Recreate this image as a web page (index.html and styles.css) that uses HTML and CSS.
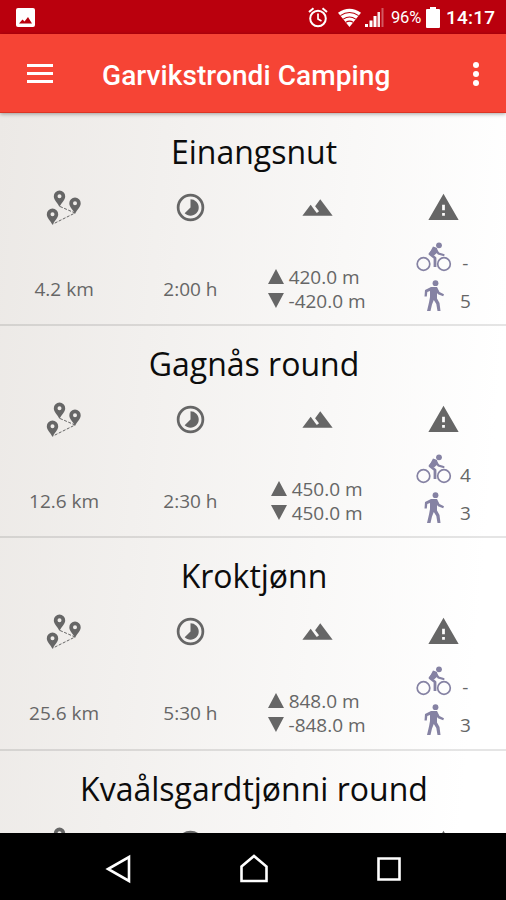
FILE: index.html
```html
<!DOCTYPE html>
<html lang="en">
<head>
<meta charset="utf-8">
<title>Garvikstrondi Camping</title>
<link rel="stylesheet" href="styles.css">
</head>
<body>
<svg class="defs" aria-hidden="true">
  <symbol id="route" viewBox="0 0 36 36">
    <path d="M14 17.500 29 24 7 35" fill="none" stroke="#666" stroke-width="1" stroke-dasharray="3 1.500"/>
    <path id="pin" fill-rule="evenodd" d="M13.500 1.500a5.700 5.700 0 0 0-5.700 5.700c0 4 3.800 6.200 5.700 10.800 1.900-4.600 5.700-6.800 5.700-10.800a5.700 5.700 0 0 0-5.700-5.700zm0 3.700a2 2 0 1 1 0 4 2 2 0 0 1 0-4z"/>
    <use href="#pin" x="15.500" y="7"/>
    <use href="#pin" x="-7" y="18"/>
  </symbol>
  <symbol id="time" viewBox="0 0 24 24"><path d="M16.240 7.760A5.970 5.970 0 0 0 12 6v6l-4.240 4.240c2.340 2.340 6.140 2.340 8.490 0 2.340-2.340 2.340-6.140-.010-8.480zM12 2a10 10 0 1 0 0 20 10 10 0 0 0 0-20zm0 18a8 8 0 1 1 0-16 8 8 0 0 1 0 16z"/></symbol>
  <symbol id="hills" viewBox="0 0 24 24"><path d="M14 6l-3.750 5 2.850 3.800-1.600 1.200C9.810 13.750 7 10 7 10l-6 8h22L14 6z"/></symbol>
  <symbol id="warn" viewBox="0 0 24 24"><path d="M1 21h22L12 2 1 21zm12-3h-2v-2h2v2zm0-4h-2v-4h2v4z"/></symbol>
  <symbol id="up" viewBox="0 0 16 15"><path d="M8 0l8 15H0z"/></symbol>
  <symbol id="down" viewBox="0 0 16 15"><path d="M0 0h16L8 15z"/></symbol>
  <symbol id="bike" viewBox="0 0 36 30">
    <g fill="none" stroke="#8582a3"><circle cx="7.500" cy="22" r="6.300" stroke-width="1.700"/><circle cx="28" cy="22" r="6.300" stroke-width="1.700"/><path d="M19.500 6 14 12l5 4v9" stroke-width="2.800" stroke-linejoin="round"/><path d="M19 7l3.500 4.500 5 1.500" stroke-width="2.200" stroke-linecap="round"/></g>
    <path d="M17 4.500l4 1.500 1 4-4 3.500-5-1.500z"/><circle cx="23" cy="3.300" r="2.900"/>
  </symbol>
  <symbol id="walk" viewBox="0 0 20 32">
    <circle cx="11.500" cy="3.200" r="2.900"/>
    <path d="M7 7h6l2.500 5 4.500 2.200-.8 2-5.200-2-1-1.200v5.500l2.500 4.500 1 8h-3l-1.200-7-2.500-4-1.800 4.500L6.500 31H3l2-8.500L6 17v-6l-2.700 1-.500 4.500H.5L1 10z"/>
  </symbol>
</svg>
<div class="phone">
  <div class="status">
    <svg class="photo" viewBox="0 0 19 19"><rect width="19" height="19" rx="2" fill="#fff"/><path d="M3 15.500l3.500-4 2 2 3.500-4.500 4 6.500z" fill="#ba000d"/></svg>
    <svg class="alarm" viewBox="0 0 20 21" fill="none" stroke="#fff"><circle cx="10" cy="11.500" r="7.800" stroke-width="2"/><path d="M10 6.500V12l3.500 2" stroke-width="1.700"/><path d="M1 5l4.500-3.800M19 5l-4.500-3.800" stroke-width="2"/></svg>
    <svg class="wifi" viewBox="0 0 24 20"><path d="M0 4.500Q12-4 24 4.500L12 19.500z" fill="#fff"/><path d="M2.500 7.500q9.500-6.500 19 0M5.500 11.200q6.500-4.500 13 0M8.200 14.500q3.800-2.500 7.600 0" fill="none" stroke="#ba000d" stroke-width="1.100"/></svg>
    <svg class="signal" viewBox="0 0 19 19" fill="#fff"><path d="M0 16h3v3H0zM4.500 12.500h3V19h-3zM8.500 8h3v11h-3z"/><path d="M12.500 4H15v15h-2.500z" opacity=".9"/><path d="M16.500 0h2v19h-2z" opacity=".35"/></svg>
    <span class="percent">96%</span>
    <svg class="battery" viewBox="0 0 14 21"><path d="M4 0h6v2h3q1 0 1 1v17q0 1-1 1H1q-1 0-1-1V3q0-1 1-1h3z" fill="#fff"/></svg>
    <span class="clock">14:17</span>
  </div>
  <header class="bar">
    <div class="menu"><i></i><i></i><i></i></div>
    <h1>Garvikstrondi Camping</h1>
    <div class="more"><i></i><i></i><i></i></div>
  </header>
  <main class="list">
    <section class="tour">
      <h2>Einangsnut</h2>
      <div class="icons"><svg class="route"><use href="#route"/></svg><svg><use href="#time"/></svg><svg><use href="#hills"/></svg><svg><use href="#warn"/></svg></div>
      <div class="values">
        <span>4.2 km</span><span>2:00 h</span>
        <div class="climb"><div><svg><use href="#up"/></svg>420.0 m</div><div><svg><use href="#down"/></svg>-420.0 m</div></div>
        <div class="grade"><svg class="bike"><use href="#bike"/></svg><b>-</b><svg class="walk"><use href="#walk"/></svg><b>5</b></div>
      </div>
    </section>
    <section class="tour">
      <h2>Gagnås round</h2>
      <div class="icons"><svg class="route"><use href="#route"/></svg><svg><use href="#time"/></svg><svg><use href="#hills"/></svg><svg><use href="#warn"/></svg></div>
      <div class="values">
        <span>12.6 km</span><span>2:30 h</span>
        <div class="climb short"><div><svg><use href="#up"/></svg>450.0 m</div><div><svg><use href="#down"/></svg>450.0 m</div></div>
        <div class="grade"><svg class="bike"><use href="#bike"/></svg><b>4</b><svg class="walk"><use href="#walk"/></svg><b>3</b></div>
      </div>
    </section>
    <section class="tour">
      <h2>Kroktjønn</h2>
      <div class="icons"><svg class="route"><use href="#route"/></svg><svg><use href="#time"/></svg><svg><use href="#hills"/></svg><svg><use href="#warn"/></svg></div>
      <div class="values">
        <span>25.6 km</span><span>5:30 h</span>
        <div class="climb"><div><svg><use href="#up"/></svg>848.0 m</div><div><svg><use href="#down"/></svg>-848.0 m</div></div>
        <div class="grade"><svg class="bike"><use href="#bike"/></svg><b>-</b><svg class="walk"><use href="#walk"/></svg><b>3</b></div>
      </div>
    </section>
    <section class="tour">
      <h2>Kvaålsgardtjønni round</h2>
      <div class="icons"><svg class="route"><use href="#route"/></svg><svg><use href="#time"/></svg><svg><use href="#hills"/></svg><svg><use href="#warn"/></svg></div>
    </section>
  </main>
  <nav class="nav">
    <svg viewBox="0 0 28 30"><path d="M24 3v24L3 15z"/></svg>
    <svg viewBox="0 0 28 30"><path d="M1.500 12.500 14 2l12.500 10.500V27h-25z"/></svg>
    <svg viewBox="0 0 28 30"><path d="M3.500 4.500h21v21h-21z"/></svg>
  </nav>
</div>
</body>
</html>
```

FILE: styles.css
```css
* { box-sizing: border-box; }
body { margin: 0; }
.defs { display: block; width: 0; height: 0; }
.phone {
  width: 506px;
  height: 900px;
  display: flex;
  flex-direction: column;
  overflow: hidden;
  font-family: "Open Sans", "Noto Sans", sans-serif;
}
.status {
  height: 34px;
  flex: none;
  display: flex;
  align-items: center;
  padding: 1px 10px 0 16px;
  background: #ba000d;
  color: #fff;
  font-family: Roboto, sans-serif;
}
.status svg { flex: none; }
.photo { width: 19px; height: 19px; margin-right: auto; }
.alarm { width: 20px; height: 21px; margin-right: 10px; }
.wifi { width: 23px; height: 20px; margin-right: 4px; }
.signal { width: 19px; height: 19px; margin-right: 7px; }
.percent { width: 35px; font-size: 16.500px; letter-spacing: -.2px; }
.battery { width: 14px; height: 21px; margin-right: 6px; }
.clock { width: 50px; font-size: 19px; font-weight: 500; white-space: nowrap; letter-spacing: .2px; }
.bar {
  position: relative;
  z-index: 1;
  height: 79px;
  flex: none;
  display: flex;
  align-items: center;
  padding: 0 27px 0 27px;
  background: #f64435;
  color: #fff;
  border-bottom: 1px solid #dc3524;
  box-shadow: 0 1px 4px rgba(0, 0, 0, .35);
}
.menu { width: 26px; display: grid; gap: 5px; margin-top: 1px; }
.menu i { height: 3px; background: #fff; }
.bar h1 {
  margin: 5px auto 0 49px;
  font: 500 28px/36px Roboto, sans-serif;
  letter-spacing: .08px;
  white-space: nowrap;
}
.more { display: grid; gap: 3px; margin-top: 1px; }
.more i { width: 6px; height: 6px; border-radius: 50%; background: #fff; }
.list {
  flex: 1;
  min-height: 0;
  overflow: hidden;
  background: linear-gradient(95deg, #ece9e6, #fff 92%);
  color: #666;
}
.tour { height: 212.300px; padding-left: 1px; border-bottom: 2px solid rgba(0, 0, 0, .1); }
.tour h2 {
  margin: 0;
  padding: 16px 0 0 1px;
  height: 77px;
  font-size: 32px;
  line-height: 44px;
  font-weight: 400;
  text-align: center;
  white-space: nowrap;
  color: #0c0c0c;
}
.tour:first-child { height: 213px; }
.tour:first-child h2 { height: 78px; padding-top: 17px; }
.icons, .values { display: grid; grid-template-columns: repeat(4, 1fr); justify-items: center; }
.icons svg { width: 33px; height: 33px; fill: #666; margin-left: 1px; }
.icons .route { width: 36px; height: 36px; margin: -2px 0 0 -1px; }
.values { height: 98px; margin-top: -2px; font-size: 19px; line-height: 24px; white-space: nowrap; }
.values > span { padding-top: 54px; }
.climb { width: 98px; padding-top: 42px; }
.climb.short { width: 92px; }
.climb div { display: flex; align-items: center; gap: 5px; }
.climb svg { width: 16px; height: 15px; fill: #666; margin-top: -1px; }
.grade {
  display: grid;
  grid-template-columns: 36px 12px;
  grid-template-rows: 38px 38px;
  column-gap: 7px;
  align-content: start;
  justify-items: center;
  margin-left: 2px;
  padding-top: 17px;
}
.grade b { font-weight: 400; padding-top: 11px; }
.grade svg { fill: #8582a3; }
.bike { width: 36px; height: 30px; margin-top: 2px; }
.walk { width: 20px; height: 32px; margin-top: 2px; }
.nav {
  height: 67px;
  flex: none;
  display: flex;
  justify-content: center;
  gap: 107px;
  padding: 21px 0 0 2px;
  background: #000;
}
.nav svg { width: 28px; height: 30px; fill: none; stroke: #fff; stroke-width: 2.600; }
```
